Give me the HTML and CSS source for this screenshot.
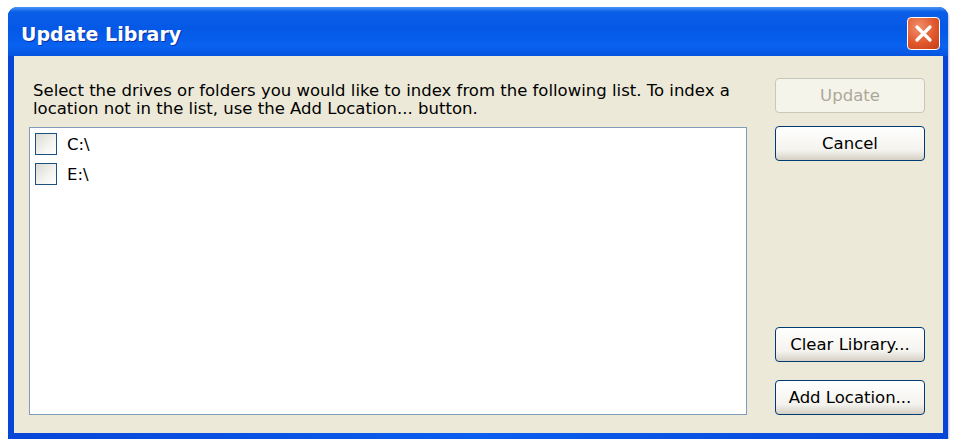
FILE: index.html
```html
<!DOCTYPE html>
<html lang="en">
  <head>
    <meta charset="UTF-8" />
    <meta name="viewport" content="width=device-width, initial-scale=1.0" />
    <title>Update Library</title>
    <link rel="stylesheet" href="styles.css">
  </head>
  <body>
    <div class="window">
      <div class="titlebar">
        <h1>Update Library</h1>
        <button class="close" type="button" aria-label="Close">
          <svg width="19" height="19" viewBox="0 0 19 19">
            <path d="M3 3 L16 16 M16 3 L3 16" stroke="#fff" stroke-width="3.2" stroke-linecap="round" />
          </svg>
        </button>
      </div>

      <div class="client">
        <div class="left">
          <p class="intro">
            Select the drives or folders you would like to index from the following list. To index a
            location not in the list, use the Add Location... button.
          </p>
          <div class="listbox">
            <label class="row"><input type="checkbox" /><span>C:\</span></label>
            <label class="row"><input type="checkbox" /><span>E:\</span></label>
          </div>
        </div>

        <div class="right">
          <div class="btn-group">
            <button class="btn" type="button" disabled>Update</button>
            <button class="btn" type="button">Cancel</button>
          </div>
          <div class="btn-group">
            <button class="btn" type="button">Clear Library...</button>
            <button class="btn btn-last" type="button">Add Location...</button>
          </div>
        </div>
      </div>
    </div>
  </body>
</html>
```

FILE: styles.css
```css
* {
  margin: 0;
  padding: 0;
  box-sizing: border-box;
}

body {
  background: #fff;
  font-family: "DejaVu Sans", Verdana, sans-serif;
}

.window {
  margin: 7px 0 0 8px;
  width: 940px;
  height: 432px;
  border-radius: 9px 9px 0 0;
  background: linear-gradient(90deg, #0846d8, #0a5ef0 50%, #0846d8);
  display: flex;
  flex-direction: column;
  box-shadow: 1px 2px 2px rgba(120, 120, 140, 0.45);
}

.titlebar {
  height: 49px;
  border-radius: 9px 9px 0 0;
  display: flex;
  align-items: center;
  justify-content: space-between;
  padding: 3px 8px 0 13px;
  background: linear-gradient(#4a96fa 0%, #0a5ee6 10%, #0458e6 45%, #0a62f0 80%, #0654e0 100%);
}

.titlebar h1 {
  color: #fff;
  font-size: 19px;
  font-weight: bold;
  text-shadow: 1px 1px 0 #0b2f9e;
  padding-top: 2px;
}

.close {
  width: 33px;
  height: 33px;
  border: 1.5px solid #fff;
  border-radius: 4px;
  background: radial-gradient(circle at 35% 30%, #f0906c, #e1582c 55%, #c43d16);
  display: flex;
  align-items: center;
  justify-content: center;
}

.client {
  flex: 1;
  margin: 0 5px 6px 6px;
  background: #ece9d8;
  display: flex;
  padding: 22px 18px 18px 15px;
  font-size: 16.5px;
  color: #000;
}

.left {
  width: 718px;
  display: flex;
  flex-direction: column;
}

.intro {
  padding: 4px 0 0 4px;
  line-height: 18px;
  margin-bottom: 9px;
}

.listbox {
  flex: 1;
  background: #fff;
  border: 1px solid #7f9db9;
  padding: 5px 5px;
  display: flex;
  flex-direction: column;
  gap: 8px;
}

.row {
  display: flex;
  align-items: center;
  gap: 10px;
}

.row input {
  appearance: none;
  width: 22px;
  height: 22px;
  border: 1px solid #1c5180;
  background: linear-gradient(135deg, #dcdcd4, #f4f4f0 60%, #fff);
}

.right {
  margin-left: 28px;
  width: 150px;
  display: flex;
  flex-direction: column;
  justify-content: space-between;
}

.btn-group {
  display: flex;
  flex-direction: column;
  gap: 13px;
}

.btn {
  height: 35px;
  font-family: inherit;
  font-size: 16.5px;
  color: #000;
  border: 1px solid #003c74;
  border-radius: 4px;
  background: linear-gradient(#ffffff, #f4f3ee 70%, #d6d0c5);
}

.btn:disabled {
  color: #aca899;
  border-color: #c9c7ba;
  background: #f5f4ea;
}

.btn-last {
  margin-top: 5px;
}
```
